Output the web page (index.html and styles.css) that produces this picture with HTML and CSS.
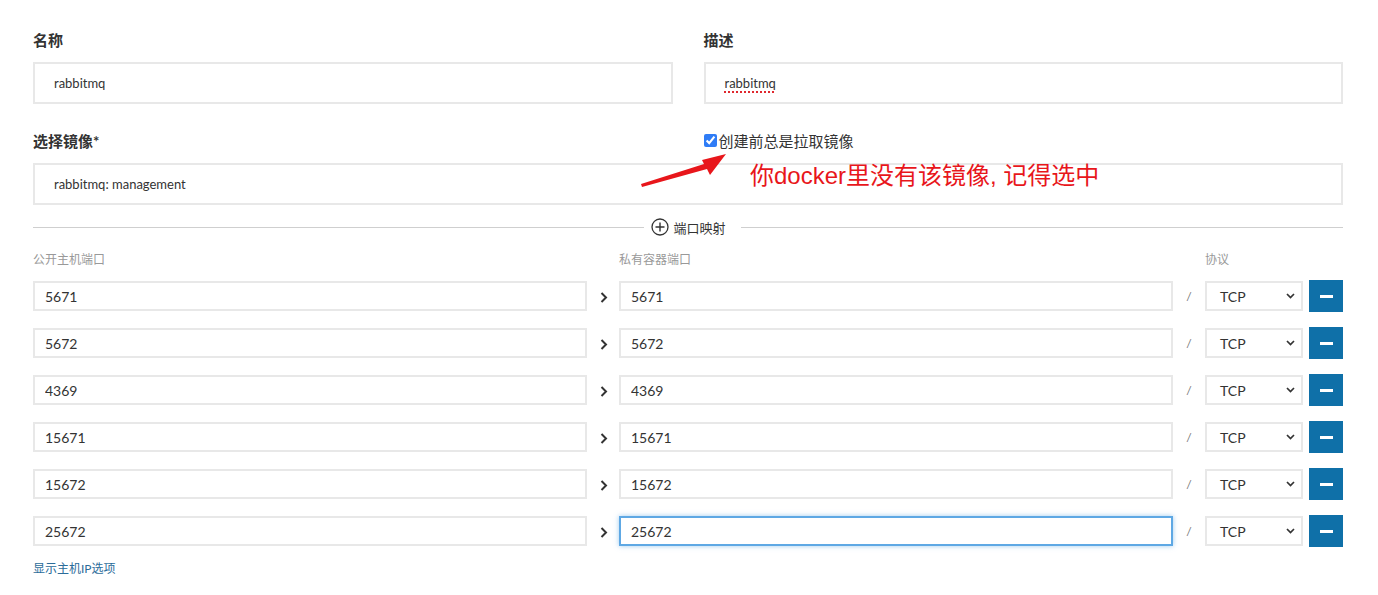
FILE: index.html
```html
<!DOCTYPE html>
<html lang="zh-CN">
<head>
    <meta charset="UTF-8">
    <meta name="viewport" content="width=device-width, initial-scale=1.0">
    <title>创建容器</title>
    <link rel="stylesheet" href="styles.css">
</head>
<body>
    <div class="page">

        <!-- Name / description -->
        <div class="grid-2">
            <div class="field">
                <label for="name">名称</label>
                <input id="name" class="input" type="text" value="rabbitmq">
            </div>
            <div class="field">
                <label>描述</label>
                <div class="input"><span class="typo">rabbitmq</span></div>
            </div>
        </div>

        <!-- Image -->
        <div class="grid-2 image-row">
            <label for="image" class="field-label">选择镜像*</label>
            <label class="check">
                <input type="checkbox" checked>
                <span>创建前总是拉取镜像</span>
            </label>
        </div>
        <input id="image" class="input" type="text" value="rabbitmq: management">

        <!-- Divider -->
        <div class="divider">
            <span class="line line-left"></span>
            <svg class="plus" width="18" height="18" viewBox="0 0 18 18">
                <circle cx="9" cy="9" r="8" fill="none" stroke="#333" stroke-width="1.3"/>
                <path d="M9 4.5v9M4.5 9h9" stroke="#333" stroke-width="1.4"/>
            </svg>
            <span class="divider-text">端口映射</span>
            <span class="line line-right"></span>
        </div>

        <!-- Port mappings -->
        <div class="ports">
            <div class="port-row port-head">
                <span>公开主机端口</span>
                <span></span>
                <span>私有容器端口</span>
                <span></span>
                <span>协议</span>
                <span></span>
            </div>
            <div id="port-list"></div>
        </div>

        <a class="host-link" href="#">显示主机IP选项</a>

        <!-- Annotation -->
        <svg class="arrow" width="95" height="40" viewBox="0 0 95 40">
            <polygon points="3,34 66,14 64,10 88,4 72,25 69,19 4,37" fill="#e8161b"/>
        </svg>
        <div class="note">你docker里没有该镜像, 记得选中</div>
    </div>

    <script>
        const ports = [5671, 5672, 4369, 15671, 15672, 25672];

        const chevron = '<svg width="9" height="13" viewBox="0 0 9 13"><path d="M2.5 2l4.5 4.5-4.5 4.5" fill="none" stroke="#333" stroke-width="2"/></svg>';
        const caret = '<svg width="9" height="6" viewBox="0 0 9 6"><path d="M1 1l3.5 3.5 3.5-3.5" fill="none" stroke="#333" stroke-width="1.7"/></svg>';

        const list = document.getElementById('port-list');
        ports.forEach(function (p, i) {
            const last = i === ports.length - 1;
            const row = document.createElement('div');
            row.className = 'port-row';
            row.innerHTML =
                '<input class="port-input" type="text" value="' + p + '">' +
                '<span class="sep">' + chevron + '</span>' +
                '<input class="port-input' + (last ? ' focused' : '') + '" type="text" value="' + p + '">' +
                '<span class="slash">/</span>' +
                '<div class="select"><span>TCP</span>' + caret + '</div>' +
                '<button class="btn-remove"><span></span></button>';
            list.appendChild(row);
        });
    </script>
</body>
</html>
```

FILE: styles.css
```css
* {
    box-sizing: border-box;
}

body {
    margin: 0;
    background: #fff;
    color: #333;
    font-family: Lato, "Noto Sans CJK SC", sans-serif;
}

.page {
    position: relative;
    padding: 30px 35px 0 33px;
    height: 595px;
}

.grid-2 {
    display: grid;
    grid-template-columns: 1fr 1fr;
    column-gap: 31px;
}

.field label,
.field-label {
    display: block;
    font-size: 15px;
    font-weight: bold;
    line-height: 20px;
    margin-bottom: 12px;
}

.input {
    display: flex;
    align-items: center;
    width: 100%;
    height: 42px;
    border: 2px solid #e8e8e8;
    padding: 0 19px;
    font-family: Lato, "Noto Sans CJK SC", sans-serif;
    font-size: 13px;
    color: #333;
    outline: none;
    background: #fff;
}

.typo {
    text-decoration: underline dotted #e0282e;
    text-decoration-thickness: 2px;
    text-underline-offset: 3px;
}

.image-row {
    margin-top: 27px;
}

.check {
    display: flex;
    align-items: center;
    height: 20px;
    margin-top: -1px;
    font-size: 15px;
    color: #333;
}

.check input {
    margin: 0 2px 0 0;
    width: 13px;
    height: 13px;
    accent-color: #2f7cf6;
}

/* Divider */
.divider {
    display: flex;
    align-items: center;
    height: 20px;
    margin-top: 12px;
}

.line {
    height: 1px;
    background: #cfcfcf;
}

.line-left {
    flex: 612 1 0;
    margin-right: 7px;
}

.line-right {
    flex: 603 1 0;
    margin-left: 15px;
}

.plus {
    margin-right: 4px;
}

.divider-text {
    font-size: 13px;
}

/* Ports */
.ports {
    margin-top: 15px;
}

.port-row {
    display: grid;
    grid-template-columns: 1fr 32px 1fr 32px 98px 40px;
    align-items: center;
    height: 32px;
    margin-bottom: 15px;
}

.port-head {
    height: 16px;
    margin-bottom: 12px;
    font-size: 12px;
    line-height: 16px;
    color: #999;
}

.port-input {
    height: 30px;
    width: 100%;
    border: 2px solid #e8e8e8;
    padding: 0 10px;
    font-family: Lato, "Noto Sans CJK SC", sans-serif;
    font-size: 14px;
    color: #333;
    outline: none;
}

.port-input.focused {
    border-color: #5ea8e4;
    box-shadow: 0 0 5px rgba(94, 168, 228, 0.6);
}

.sep {
    display: flex;
    justify-content: center;
    padding-top: 2px;
}

.slash {
    text-align: center;
    font-size: 12px;
    color: #777;
}

.select {
    display: flex;
    align-items: center;
    justify-content: space-between;
    height: 30px;
    border: 2px solid #e8e8e8;
    padding: 0 6px 0 13px;
    font-size: 14px;
}

.btn-remove {
    justify-self: end;
    width: 34px;
    height: 32px;
    border: none;
    background: #0f70a8;
    display: flex;
    align-items: center;
    justify-content: center;
    padding: 0;
}

.btn-remove span {
    width: 13px;
    height: 3px;
    background: #fff;
}

.host-link {
    display: block;
    margin-top: -1px;
    font-size: 12px;
    line-height: 16px;
    color: #2b6c9a;
    text-decoration: none;
}

/* Annotation overlay */
.arrow {
    position: absolute;
    left: 638px;
    top: 150px;
}

.note {
    position: absolute;
    left: 750px;
    top: 162px;
    font-family: "Liberation Sans", "Noto Sans CJK SC", sans-serif;
    font-size: 24px;
    line-height: 28px;
    color: #e8161b;
}
```
